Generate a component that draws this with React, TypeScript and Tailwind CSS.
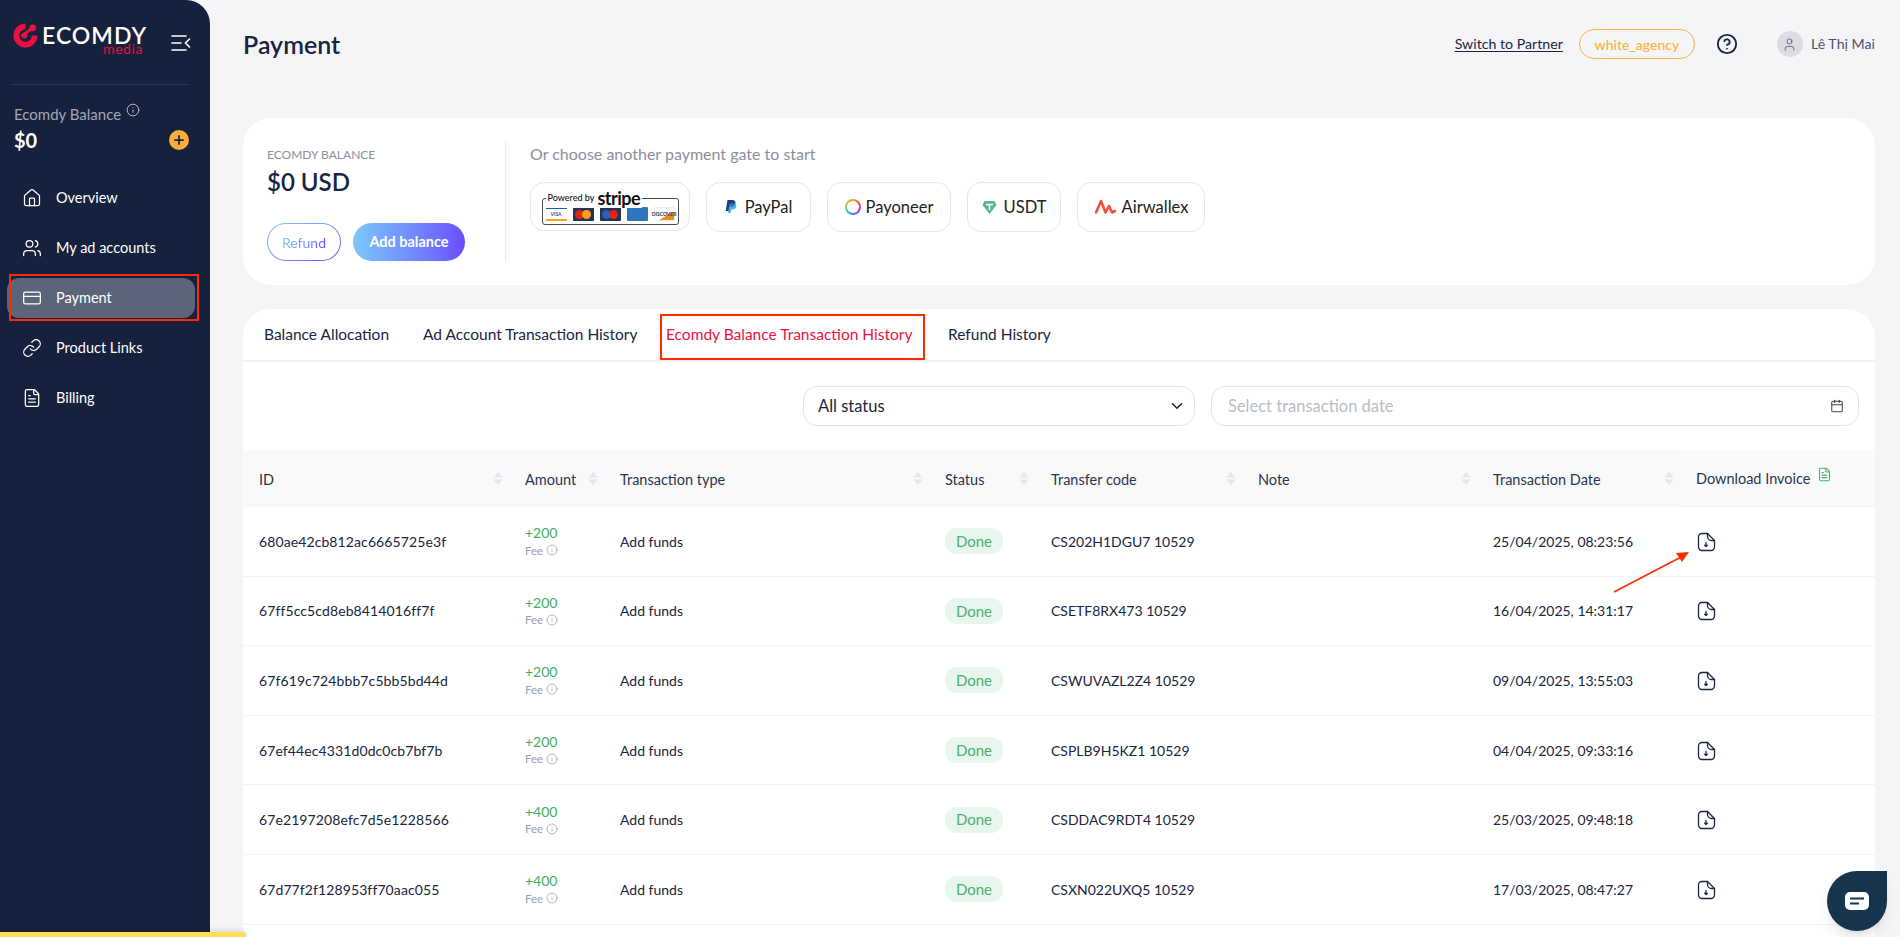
import React from 'react';
import { Home, Users, CreditCard, Link, FileText, Info, ChevronDown, Calendar, CircleHelp, User, Plus } from 'lucide-react';

const COLS = 'grid grid-cols-[266px_95px_325px_106px_207px_235px_203px_195px]';

const rows = [
  { id: '680ae42cb812ac6665725e3f', amount: '+200', code: 'CS202H1DGU7 10529', date: '25/04/2025, 08:23:56' },
  { id: '67ff5cc5cd8eb8414016ff7f', amount: '+200', code: 'CSETF8RX473 10529', date: '16/04/2025, 14:31:17' },
  { id: '67f619c724bbb7c5bb5bd44d', amount: '+200', code: 'CSWUVAZL2Z4 10529', date: '09/04/2025, 13:55:03' },
  { id: '67ef44ec4331d0dc0cb7bf7b', amount: '+200', code: 'CSPLB9H5KZ1 10529', date: '04/04/2025, 09:33:16' },
  { id: '67e2197208efc7d5e1228566', amount: '+400', code: 'CSDDAC9RDT4 10529', date: '25/03/2025, 09:48:18' },
  { id: '67d77f2f128953ff70aac055', amount: '+400', code: 'CSXN022UXQ5 10529', date: '17/03/2025, 08:47:27' },
];

const menu = [
  { label: 'Overview', Icon: Home },
  { label: 'My ad accounts', Icon: Users },
  { label: 'Payment', Icon: CreditCard, active: true },
  { label: 'Product Links', Icon: Link },
  { label: 'Billing', Icon: FileText },
];

const SortIcon = () => (
  <svg width="10" height="13" viewBox="0 0 10 13" className="shrink-0 text-[#e4e5f0]" fill="currentColor">
    <path d="M5 0l4.500 5.500h-9z" />
    <path d="M5 13L.5 7.500h9z" />
  </svg>
);

const HeadCell = ({ label }: { label: string }) => (
  <div className="flex items-center justify-between pl-4 pr-[6px]">
    <span className="pt-[3px]">{label}</span>
    {label && <SortIcon />}
  </div>
);

const DownloadDoc = () => (
  <svg width="20" height="20" viewBox="0 0 20 20" fill="none" stroke="#1a2541" strokeWidth="1.300" strokeLinecap="round" strokeLinejoin="round" className="mt-[1px]">
    <path d="M6 1.500h5.500l7 7V15a3.500 3.500 0 0 1-3.500 3.500H6A3.500 3.500 0 0 1 2.500 15V5A3.500 3.500 0 0 1 6 1.500z" />
    <path d="M11.500 1.500V4.500a4 4 0 0 0 4 4h3" />
    <path d="M10 10.500v4M8.700 13.300l1.300 1.300 1.300-1.300" />
  </svg>
);

const Logo = () => (
  <div className="flex items-start">
    <svg width="27" height="27" viewBox="0 0 28 28" className="shrink-0">
      <path d="M14 1.500A12.500 12.500 0 1 0 26.500 14h-6A6.500 6.500 0 1 1 14 7.500z" fill="#e8113f" />
      <path d="M9.500 15L21 6.500" stroke="#e8113f" strokeWidth="3" />
      <circle cx="21.500" cy="6" r="3.500" fill="#e8113f" />
      <circle cx="13" cy="14" r="3" fill="#e8113f" />
    </svg>
    <div className="ml-[3px] mt-[4px] flex flex-col items-end">
      <span className="text-[23px] leading-[18px] font-semibold tracking-[1px] text-white">ECOMDY</span>
      <span className="mr-[4px] text-[14px] leading-[10px] tracking-[0.6px] text-[#e8113f]">media</span>
    </div>
  </div>
);

const Sidebar = () => (
  <aside className="relative flex w-[210px] shrink-0 flex-col rounded-tr-[24px] bg-[#16213e] text-white">
    <div className="mx-3 mr-5 flex h-[85px] items-start justify-between border-b border-[#2b3654] pt-[22px]">
      <Logo />
      <svg width="20" height="18" viewBox="0 0 20 18" fill="none" stroke="#fff" strokeWidth="1.600" strokeLinecap="round" className="mt-[12px] -mr-[1px]">
        <path d="M1 2h14M1 9h9M1 16h14M18.500 5l-4 4 4 4" />
      </svg>
    </div>
    <div className="mx-[14px] mr-[21px] mt-[19px]">
      <div className="flex items-start gap-[5px] text-[15px] leading-5 text-[#a3a7b5]">
        Ecomdy Balance
        <Info size={14} strokeWidth={1.500} className="mt-[-1px] text-[#c5c8d2]" />
      </div>
      <div className="mt-[4px] flex items-center justify-between">
        <span className="text-[20px] leading-6 font-bold">$0</span>
        <span className="flex h-5 w-5 items-center justify-center rounded-full bg-[#f9ae3c] text-[#16213e]">
          <Plus size={14} strokeWidth={3} />
        </span>
      </div>
    </div>
    <nav className="mt-[26px] flex flex-col px-[7px]">
      {menu.map(({ label, Icon, active }) => (
        <div
          key={label}
          className={`mb-[10px] flex h-10 w-[188px] items-center gap-[14px] rounded-[12px] pb-[1px] pl-[15px] text-[14.500px] ${active ? 'bg-[#5b6579]' : ''}`}
        >
          <Icon size={20} strokeWidth={1.500} />
          {label}
        </div>
      ))}
    </nav>
    {/* red annotation around the active item */}
    <div className="absolute left-[9px] top-[274px] h-[47px] w-[190px] border-2 border-[#ff2a00]" />
  </aside>
);

const Header = () => (
  <header className="flex h-[89px] items-center justify-between">
    <h1 className="text-[25px] font-semibold text-[#1a2541]">Payment</h1>
    <div className="flex items-center pb-[1px]">
      <span className="text-[14.200px] text-[#1a2541] underline underline-offset-2">Switch to Partner</span>
      <span className="ml-4 flex h-[30px] w-[116px] items-center justify-center rounded-full border border-[#fbb040] text-[14px] font-medium text-[#fbb040]">
        white_agency
      </span>
      <CircleHelp size={22} strokeWidth={2} className="ml-[21px] text-[#1a2541]" />
      <span className="ml-[39px] flex h-[26px] w-[26px] items-center justify-center rounded-full bg-[#dcdde2] text-[#5b6579]">
        <User size={15} strokeWidth={1.500} />
      </span>
      <span className="ml-2 text-[14.200px] text-[#4b5368]">Lê Thị Mai</span>
    </div>
  </header>
);

const CardThumb = ({ className, children }: { className: string; children?: React.ReactNode }) => (
  <span className={`flex h-[14px] w-[21px] items-center justify-center rounded-[1px] text-[5px] leading-none font-bold ${className}`}>
    {children}
  </span>
);

const StripeBadge = () => (
  <div className="flex h-[49px] w-[160px] items-center justify-center rounded-[14px] border border-[#e6e6e9] bg-white">
    <div className="relative mt-[10px] flex h-[27px] w-[137px] items-end justify-between rounded-[3px] border border-[#4a4a4a] px-[3px] pb-[3px]">
      <span className="absolute -top-[11px] left-[3px] flex items-center gap-[3px] bg-white px-[2px] text-[#111]">
        <span className="text-[9px] leading-5 font-medium">Powered by</span>
        <span className="text-[18px] leading-5 font-bold tracking-[-0.5px]">stripe</span>
      </span>
      <CardThumb className="border-y-2 border-t-[#2b5aa7] border-b-[#f7a21b] bg-white text-[#2b5aa7]">VISA</CardThumb>
      <CardThumb className="bg-[#24344f]">
        <span className="h-[9px] w-[9px] rounded-full bg-[#e2231a]" />
        <span className="-ml-[2px] h-[9px] w-[9px] rounded-full bg-[#f79e1b]" />
      </CardThumb>
      <CardThumb className="bg-[#24344f]">
        <span className="h-[9px] w-[9px] rounded-full bg-[#2a5fb8]" />
        <span className="-ml-[2px] h-[9px] w-[9px] rounded-full bg-[#e2231a]" />
      </CardThumb>
      <CardThumb className="bg-[#2e77bc]" />
      <CardThumb className="border border-[#eee] bg-[linear-gradient(150deg,#fff_62%,#f08a24_63%)] text-[3px] text-[#333]">DISCOVER</CardThumb>
    </div>
  </div>
);

const Gate = ({ width, children }: { width: string; children: React.ReactNode }) => (
  <div className={`flex h-[50px] items-center justify-center gap-[5px] rounded-[14px] border border-[#e6e6e9] bg-white text-[16.500px] text-[#222] ${width}`}>
    {children}
  </div>
);

const BalanceCard = () => (
  <section className="mt-[29px] flex h-[167px] rounded-[28px] bg-white pt-6">
    <div className="flex h-[120px] w-[263px] shrink-0 flex-col border-r border-[#ececef] pl-6 pt-[5px]">
      <span className="text-[12px] leading-4 text-[#8a8f9e]">ECOMDY BALANCE</span>
      <span className="mt-[3px] text-[24px] leading-8 font-semibold text-[#1a2541]">$0 USD</span>
      <div className="mt-[25px] flex gap-3">
        <button className="h-[38px] w-[74px] rounded-full bg-gradient-to-br from-[#7cc6fb] to-[#6a4bfb] p-[1px]">
          <span className="flex h-full w-full items-center justify-center rounded-full bg-white">
            <span className="bg-gradient-to-r from-[#7cc6fb] to-[#6a4bfb] bg-clip-text text-[14px] text-transparent">Refund</span>
          </span>
        </button>
        <button className="h-[38px] w-[112px] rounded-full bg-gradient-to-r from-[#7cc6fb] to-[#6a4bfb] text-[14.500px] font-bold text-white">
          Add balance
        </button>
      </div>
    </div>
    <div className="pl-6">
      <div className="text-[16px] leading-6 text-[#8a8f9e]">Or choose another payment gate to start</div>
      <div className="mt-[16px] flex items-start gap-4">
        <StripeBadge />
        <Gate width="w-[105px]">
          <svg width="12" height="14" viewBox="0 0 12 14" className="mr-[3px]">
            <path d="M2.500 0h4.800c2.400 0 3.500 1.400 3.100 3.400-.5 2.300-2.100 3.400-4.200 3.400H4.500L3.700 11H.7z" fill="#253b80" />
            <path d="M4.500 3.500h4.200c1.700 0 3 .9 2.700 2.800-.4 2.100-1.900 3.200-3.900 3.200H6.300L5.700 13H3z" fill="#179bd7" opacity="0.750" />
          </svg>
          PayPal
        </Gate>
        <Gate width="w-[124px]">
          <span className="h-[16px] w-[16px] rounded-full bg-[conic-gradient(#f8a21a,#ef4d5d,#a53ccf,#2f8fe8,#3cc7c0,#b9d431,#f8a21a)] p-[2px]">
            <span className="block h-full w-full rounded-full bg-white" />
          </span>
          Payoneer
        </Gate>
        <Gate width="w-[94px]">
          <svg width="15" height="15" viewBox="0 0 15 15" className="mr-[2px]">
            <path d="M2.500 1h10L14.500 5 7.500 14 .5 5z" fill="#5fb598" />
            <path d="M4 4.500h7M7.500 4.500V10" stroke="#fff" strokeWidth="1.500" />
          </svg>
          USDT
        </Gate>
        <Gate width="w-[128px]">
          <svg width="23" height="18" viewBox="0 0 23 18" fill="none" stroke="#f1503c" strokeWidth="2.600" strokeLinejoin="round" strokeLinecap="round">
            <path d="M2 14.500L7 3l4.500 11.500L15 8l3 6.500 3-1.500" />
          </svg>
          Airwallex
        </Gate>
      </div>
    </div>
  </section>
);

const Tabs = () => (
  <div className="relative flex h-[53px] items-center border-b-2 border-[#f2f2f4] pl-[21px] pt-[1px] text-[15.500px] whitespace-nowrap text-[#1a2541]">
    <span className="w-[159px]">Balance Allocation</span>
    <span className="w-[243px]">Ad Account Transaction History</span>
    <span className="w-[282px] text-[#e8113f]">Ecomdy Balance Transaction History</span>
    <span>Refund History</span>
    {/* red annotation around the selected tab */}
    <div className="absolute left-[417px] top-[5px] h-[46px] w-[265px] border-2 border-[#ff2a00]" />
  </div>
);

const Filters = () => (
  <div className="flex justify-end gap-4 pr-4 pt-[24px]">
    <div className="flex h-10 w-[392px] items-center justify-between rounded-[14px] border border-[#e3e3e6] pl-[14px] pr-2 text-[16.500px] text-[#1a2541]">
      All status
      <ChevronDown size={18} strokeWidth={2} />
    </div>
    <div className="flex h-10 w-[648px] items-center justify-between rounded-[14px] border border-[#e3e3e6] pl-4 pr-[14px] text-[16.500px] text-[#b9bcc5]">
      Select transaction date
      <Calendar size={14} strokeWidth={1.800} className="text-[#3b435a]" />
    </div>
  </div>
);

const TxTable = () => (
  <div className="relative mt-[24px] text-[14px] text-[#1a2541]">
    <div className={`${COLS} h-[57px] bg-[#f9f9fa] text-[14.500px] text-[#2c3550]`}>
      <HeadCell label="ID" />
      <HeadCell label="Amount" />
      <HeadCell label="Transaction type" />
      <HeadCell label="Status" />
      <HeadCell label="Transfer code" />
      <HeadCell label="Note" />
      <HeadCell label="Transaction Date" />
      <div className="flex items-start gap-[6px] border-b border-[#f0f0f2] bg-[#fafafb] pl-4 pt-[19px] leading-5">
        Download Invoice
        <FileText size={15} strokeWidth={1.700} className="-mt-[2px] text-[#3fb56b]" />
      </div>
    </div>
    {rows.map((row) => (
      <div key={row.id} className={`${COLS} h-[69.600px] items-center border-b border-[#f2f2f4]`}>
        <div className="pl-4 tracking-[0.1px]">{row.id}</div>
        <div className="pl-4 leading-none">
          <div className="text-[#3fae62]">{row.amount}</div>
          <div className="mt-[4px] flex items-center gap-[3px] text-[11.500px] text-[#9a9eab]">
            Fee <Info size={12} strokeWidth={1.500} />
          </div>
        </div>
        <div className="pl-4">Add funds</div>
        <div className="pl-4">
          <span className="flex h-[26px] w-[58px] items-center justify-center rounded-[12px] bg-[#e8f6ee] text-[15px] text-[#4caf70]">Done</span>
        </div>
        <div className="pl-4">{row.code}</div>
        <div />
        <div className="pl-4">{row.date}</div>
        <div className="pl-4">
          <DownloadDoc />
        </div>
      </div>
    ))}
    {/* red annotation arrow pointing at the first invoice icon */}
    <svg width="80" height="44" viewBox="0 0 80 44" className="absolute left-[1370px] top-[100px]" fill="none">
      <path d="M1 42L70 6" stroke="#ff2a00" strokeWidth="1.500" />
      <path d="M76 2l-13 1 6 9z" fill="#ff2a00" />
    </svg>
  </div>
);

export default function App() {
  return (
    <div className="relative flex h-screen overflow-hidden bg-[#f5f5f8] font-['Lato','Liberation_Sans',sans-serif]">
      <Sidebar />
      <main className="flex min-w-0 flex-1 flex-col pl-[33px] pr-[25px]">
        <Header />
        <BalanceCard />
        <section className="mt-6 flex-1 rounded-t-[28px] bg-white">
          <Tabs />
          <Filters />
          <TxTable />
        </section>
      </main>
      {/* chat launcher */}
      <div className="absolute bottom-[6px] right-[13px] flex h-[60px] w-[60px] items-center justify-center rounded-full rounded-tr-[6px] bg-[#15354f] shadow-lg">
        <svg width="24" height="18" viewBox="0 0 24 18">
          <rect x="0" y="0" width="24" height="18" rx="5" fill="#fff" />
          <path d="M5 6.500h14M5 11.500h9" stroke="#15354f" strokeWidth="2" />
        </svg>
      </div>
      {/* clipped yellow notice at the bottom edge */}
      <div className="absolute bottom-0 left-0 h-[5px] w-[246px] rounded-tr-[3px] bg-[#ffdd57] shadow-[0_0_6px_rgba(0,0,0,0.2)]" />
    </div>
  );
}
